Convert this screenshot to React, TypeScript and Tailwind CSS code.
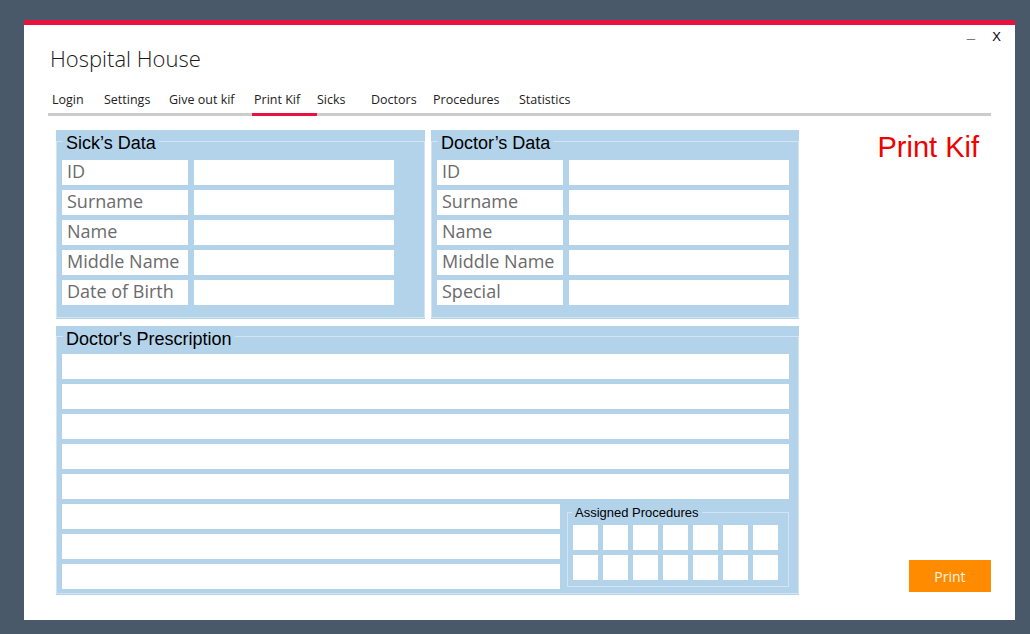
import React from "react";

const tabs: { label: string; w: string; active?: boolean; pl?: string }[] = [
  { label: "Login", w: "w-[52px]" },
  { label: "Settings", w: "w-[65px]" },
  { label: "Give out kif", w: "w-[85px]" },
  { label: "Print Kif", w: "w-[65px]", active: true },
  { label: "Sicks", w: "w-[52px]", pl: "pl-0" },
  { label: "Doctors", w: "w-[62px]" },
  { label: "Procedures", w: "w-[86px]" },
  { label: "Statistics", w: "w-[80px]" },
];

const segoe = { fontFamily: "'Open Sans', 'Noto Sans', sans-serif" };
const arial = { fontFamily: "'Liberation Sans', Arial, sans-serif" };

function Row({ label, valueW }: { label: string; valueW: string }) {
  return (
    <div className="flex gap-[6px] h-[25px]">
      <div
        className="w-[126px] h-[25px] bg-white pl-[5px] text-[18px] leading-[23px] text-[#6b6b6b] whitespace-nowrap overflow-hidden"
        style={segoe}
      >
        {label}
      </div>
      <div className={`${valueW} h-[25px] bg-white`} />
    </div>
  );
}

function DataPanel({
  title,
  labels,
  width,
  valueW,
}: {
  title: string;
  labels: string[];
  width: string;
  valueW: string;
}) {
  return (
    <div className={`relative ${width} h-[189px] bg-[#b3d3eb]`}>
      <div className="absolute top-[11px] left-0 right-0 bottom-[1px] border border-[#d3e5f2]" />
      <div className="relative h-[30px] pt-[3px] text-[18px] leading-[18px]">
        <span className="ml-[7px] px-[3px] bg-[#b3d3eb] text-black" style={arial}>
          {title}
        </span>
      </div>
      <div className="relative flex flex-col gap-[5px] px-[6px]">
        {labels.map((l) => (
          <Row key={l} label={l} valueW={valueW} />
        ))}
      </div>
    </div>
  );
}

export default function App() {
  return (
    <div className="w-[1030px] h-[634px] bg-[#4a5969] pt-[20px] pl-[24px] overflow-hidden">
      <div className="relative w-[991px] h-[600px] bg-white border-t-[5px] border-[#e8123f] flex flex-col">
        <span
          className="absolute top-[1px] right-[40px] text-[15px] font-bold leading-[14px] text-black"
          style={arial}
        >
          _
        </span>
        <span
          className="absolute top-[5px] right-[14px] text-[13px] leading-[13px] text-black"
          style={arial}
        >
          X
        </span>

        <div
          className="mt-[18px] pl-[26px] text-[22px] leading-[30px] font-light text-[#1a1a1a]"
          style={segoe}
        >
          Hospital House
        </div>

        <div className="mt-[18px] mx-[24px] pl-[2px] flex border-b-[3px] border-[#cccccc]">
          {tabs.map((t) => (
            <div
              key={t.label}
              className={`${t.w} shrink-0 ${t.pl ?? "pl-[2px]"} pb-[4px] text-[12.5px] leading-[18px] text-[#222222] whitespace-nowrap ${
                t.active ? "border-b-[3px] border-[#e8123f] -mb-[3px]" : ""
              }`}
              style={segoe}
            >
              {t.label}
            </div>
          ))}
        </div>

        <div className="mt-[14px] flex h-[465px]">
          <div className="ml-[32px] w-[743px] flex flex-col gap-[7px]">
            <div className="flex gap-[6px]">
              <DataPanel
                title="Sick’s Data"
                labels={["ID", "Surname", "Name", "Middle Name", "Date of Birth"]}
                width="w-[369px]"
                valueW="w-[200px]"
              />
              <DataPanel
                title="Doctor’s Data"
                labels={["ID", "Surname", "Name", "Middle Name", "Special"]}
                width="w-[368px]"
                valueW="w-[220px]"
              />
            </div>

            <div className="relative h-[269px] bg-[#b3d3eb]">
              <div className="absolute top-[10px] left-0 right-0 bottom-[1px] border border-[#d3e5f2]" />
              <div className="relative h-[28px] pt-[3px] text-[18px] leading-[18px]">
                <span className="ml-[7px] px-[3px] bg-[#b3d3eb] text-black" style={arial}>
                  Doctor's Prescription
                </span>
              </div>
              <div className="relative flex flex-col gap-[5px] px-[6px]">
                {[0, 1, 2, 3, 4].map((i) => (
                  <div key={i} className="w-[727px] h-[25px] bg-white" />
                ))}
                <div className="flex">
                  <div className="flex flex-col gap-[5px]">
                    {[0, 1, 2].map((i) => (
                      <div key={i} className="w-[498px] h-[25px] bg-white" />
                    ))}
                  </div>
                  <div className="relative ml-[7px] w-[222px] h-[85px]">
                    <div className="absolute top-[8px] left-0 right-0 bottom-[2px] border border-[#d3e5f2]" />
                    <div className="relative pt-[2px] h-[21px] text-[13px] leading-[13px]">
                      <span className="ml-[5px] px-[3px] bg-[#b3d3eb] text-black" style={arial}>
                        Assigned Procedures
                      </span>
                    </div>
                    <div className="relative ml-[6px] grid grid-cols-[repeat(7,25px)] gap-[5px]">
                      {Array.from({ length: 14 }).map((_, i) => (
                        <div key={i} className="w-[25px] h-[25px] bg-white" />
                      ))}
                    </div>
                  </div>
                </div>
              </div>
            </div>
          </div>

          <div className="flex-1 flex flex-col items-end pr-[24px]">
            <div
              className="mt-[3px] mr-[12px] text-[29px] leading-[28px] text-[#f00000]"
              style={arial}
            >
              Print Kif
            </div>
            <button
              className="mt-auto mb-[3px] w-[82px] h-[32px] bg-[#ff8c00] text-[14px] text-[#fff6e0]"
              style={segoe}
            >
              Print
            </button>
          </div>
        </div>
      </div>
    </div>
  );
}
